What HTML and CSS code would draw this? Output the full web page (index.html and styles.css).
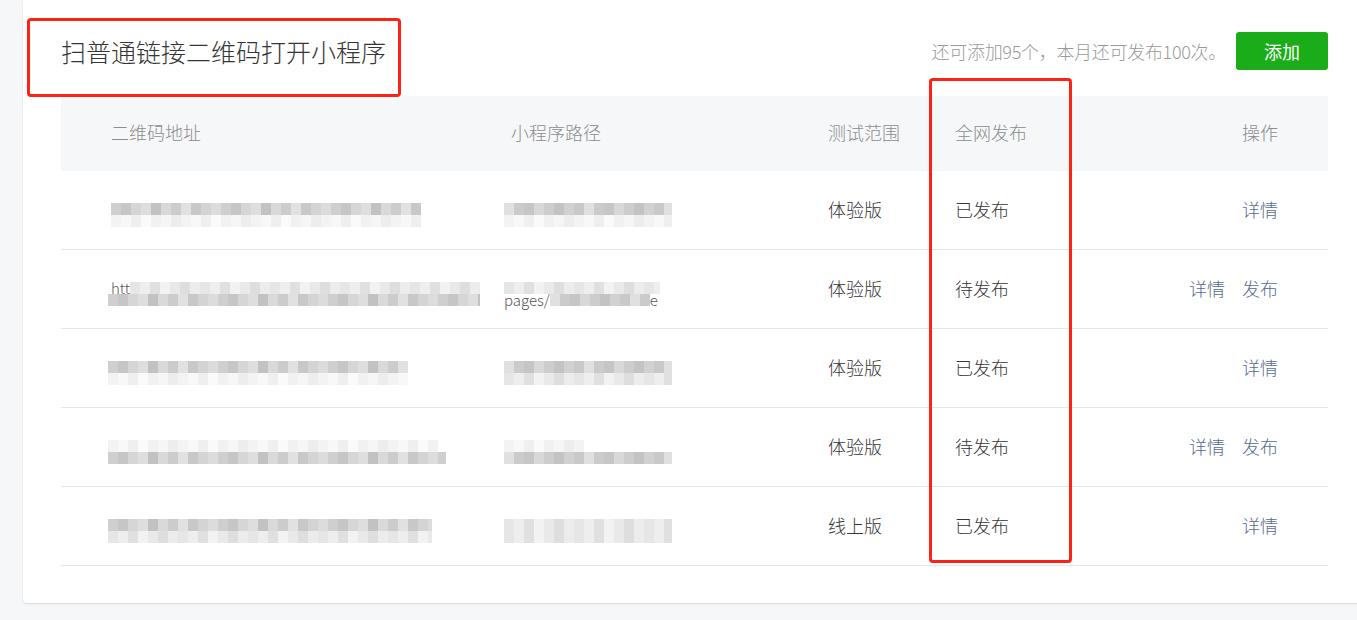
FILE: index.html
```html
<!DOCTYPE html>
<html lang="zh-CN">
<head>
<meta charset="utf-8">
<title>扫普通链接二维码打开小程序</title>
<link rel="stylesheet" href="styles.css">
</head>
<body>
<div class="page">
  <section class="card">
    <div class="topbar">
      <h2 class="title">扫普通链接二维码打开小程序</h2>
      <div class="actions">
        <span class="quota">还可添加95个，本月还可发布100次。</span>
        <button class="btn-add">添加</button>
      </div>
    </div>

    <div class="table">
      <div class="tr thead">
        <div>二维码地址</div>
        <div>小程序路径</div>
        <div>测试范围</div>
        <div>全网发布</div>
        <div class="ops">操作</div>
      </div>

      <div class="tr">
        <div class="blur">
          <div class="strip med w310"></div>
          <div class="strip light w310"></div>
        </div>
        <div class="blur col2">
          <div class="strip med2 w168"></div>
          <div class="strip light w168"></div>
        </div>
        <div>体验版</div>
        <div>已发布</div>
        <div class="ops"><a>详情</a></div>
      </div>

      <div class="tr">
        <div class="blur">
          <div class="srow"><span class="frag">htt</span><div class="strip light2 w350"></div></div>
          <div class="strip med w372 shift-l"></div>
        </div>
        <div class="blur col2">
          <div class="strip light2 w156"></div>
          <div class="srow"><span class="frag">pages/</span><div class="strip med2 w100"></div><span class="frag">e</span></div>
        </div>
        <div>体验版</div>
        <div>待发布</div>
        <div class="ops"><a>详情</a><a>发布</a></div>
      </div>

      <div class="tr">
        <div class="blur">
          <div class="strip med w300 shift-l"></div>
          <div class="strip light w300 shift-l"></div>
        </div>
        <div class="blur col2">
          <div class="strip med2 w168"></div>
          <div class="strip light2 w168"></div>
        </div>
        <div>体验版</div>
        <div>已发布</div>
        <div class="ops"><a>详情</a></div>
      </div>

      <div class="tr">
        <div class="blur">
          <div class="strip light w330 shift-l"></div>
          <div class="strip med w338 shift-l"></div>
        </div>
        <div class="blur col2">
          <div class="strip light w80"></div>
          <div class="strip med2 w168"></div>
        </div>
        <div>体验版</div>
        <div>待发布</div>
        <div class="ops"><a>详情</a><a>发布</a></div>
      </div>

      <div class="tr">
        <div class="blur">
          <div class="strip med w324 shift-l"></div>
          <div class="strip light2 w324 shift-l"></div>
        </div>
        <div class="blur col2">
          <div class="strip light2 w168"></div>
          <div class="strip light2 w168"></div>
        </div>
        <div>线上版</div>
        <div>已发布</div>
        <div class="ops"><a>详情</a></div>
      </div>
    </div>
  </section>

  <div class="mark mark-title"></div>
  <div class="mark mark-col"></div>
</div>
</body>
</html>
```

FILE: styles.css
```css
html, body {
  margin: 0;
  padding: 0;
  overflow: hidden;
  background: #f6f7f9;
}

body {
  font-family: "Noto Sans CJK SC", "Noto Sans", "Liberation Sans", sans-serif;
  font-weight: 300;
  color: #353535;
  width: 1357px;
  height: 620px;
}

.page {
  position: relative;
  width: 1357px;
  height: 620px;
}

.card {
  margin-left: 23px;
  width: 1343px;
  box-sizing: border-box;
  padding: 0 38px 37px;
  background: #fff;
  border-radius: 0 0 4px 4px;
  box-shadow: 0 1px 2px rgba(0, 0, 0, 0.12);
}

.topbar {
  display: flex;
  align-items: center;
  justify-content: space-between;
  height: 86px;
  padding-top: 8px;
  padding-bottom: 2px;
}

.title {
  margin: 0;
  font-size: 25px;
  font-weight: 300;
  color: #353535;
}

.actions {
  display: flex;
  align-items: center;
  gap: 10px;
}

.quota {
  font-size: 18px;
  letter-spacing: -0.3px;
  color: #9a9a9a;
}

.btn-add {
  width: 92px;
  height: 38px;
  border: 0;
  border-radius: 3px;
  background: #1aad19;
  color: #fff;
  font-family: inherit;
  font-weight: 400;
  font-size: 18px;
  padding: 0;
}

.table {
  display: flex;
  flex-direction: column;
}

.tr {
  display: grid;
  grid-template-columns: 400px 317px 127px 1fr auto;
  align-items: center;
  box-sizing: border-box;
  height: 79px;
  padding: 0 50px 3px;
  border-bottom: 1px solid #e7e7eb;
  font-size: 18px;
  color: #353535;
}

.thead {
  height: 75px;
  background: #f6f7f9;
  border-bottom: 0;
  color: #8d8d8d;
}

.ops {
  display: flex;
  justify-content: flex-end;
  gap: 17px;
}

.ops a {
  color: #576b95;
  text-decoration: none;
}

.blur {
  display: flex;
  flex-direction: column;
  margin-top: 12px;
}

.col2 {
  margin-left: -7px;
}

.srow {
  display: flex;
  align-items: center;
  height: 12px;
}

.frag {
  font-size: 15px;
  line-height: 12px;
  color: #555;
}

.strip {
  height: 12px;
  background-repeat: repeat-x;
}

.shift-l {
  margin-left: -3px;
}

.med {
  background-image: linear-gradient(90deg,
    #cfcfcf 0 10px, #c6c6c6 10px 20px, #d6d6d6 20px 30px, #dedede 30px 40px,
    #c2c2c2 40px 50px, #d9d9d9 50px 60px, #cccccc 60px 70px, #e1e1e1 70px 80px,
    #c8c8c8 80px 90px, #d4d4d4 90px 100px, #dcdcdc 100px 110px);
  background-size: 110px 12px;
}

.med2 {
  background-image: linear-gradient(90deg,
    #e0e0e0 0 10px, #cbcbcb 10px 20px, #c6c6c6 20px 30px, #d8d8d8 30px 40px,
    #cdcdcd 40px 50px, #c3c3c3 50px 60px, #d1d1d1 60px 70px, #c9c9c9 70px 80px);
  background-size: 80px 12px;
}

.light {
  background-image: linear-gradient(90deg,
    #f3f3f3 0 10px, #f8f8f8 10px 20px, #efefef 20px 30px, #fafafa 30px 40px,
    #f1f1f1 40px 50px, #f6f6f6 50px 60px, #ededed 60px 70px);
  background-size: 70px 12px;
}

.light2 {
  background-image: linear-gradient(90deg,
    #e6e6e6 0 10px, #eeeeee 10px 20px, #e0e0e0 20px 30px, #f2f2f2 30px 40px,
    #e9e9e9 40px 50px, #dedede 50px 60px, #ececec 60px 70px);
  background-size: 70px 12px;
}

.w80 { width: 80px; }
.w100 { width: 100px; }
.w156 { width: 156px; }
.w168 { width: 168px; }
.w300 { width: 300px; }
.w310 { width: 310px; }
.w324 { width: 324px; }
.w330 { width: 330px; }
.w338 { width: 338px; }
.w350 { width: 350px; }
.w372 { width: 372px; }

.mark {
  position: absolute;
  border: 3px solid #fb2216;
  border-radius: 4px;
  box-sizing: border-box;
  pointer-events: none;
}

.mark-title {
  left: 27px;
  top: 18px;
  width: 374px;
  height: 79px;
}

.mark-col {
  left: 929px;
  top: 78px;
  width: 143px;
  height: 485px;
}
```
